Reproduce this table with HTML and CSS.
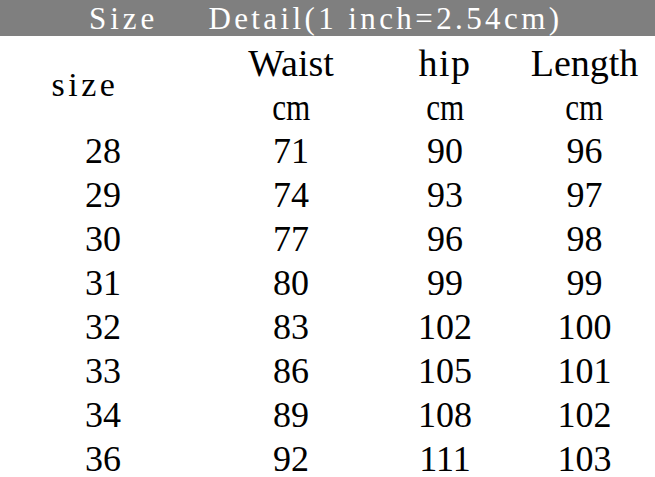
FILE: index.html
```html
<!DOCTYPE html>
<html>
<head>
<meta charset="utf-8">
<link rel="stylesheet" href="styles.css">
</head>
<body>
<div class="bar"><span class="bar-title">Size</span><span class="bar-detail">Detail(1 inch=2.54cm)</span></div>
<div class="chart">
  <div class="size-label">size</div>
  <div class="head">Waist</div>
  <div class="head head-hip">hip</div>
  <div class="head">Length</div>
  <div class="head"><span class="unit">cm</span></div>
  <div class="head"><span class="unit">cm</span></div>
  <div class="head"><span class="unit">cm</span></div>

  <div class="num">28</div><div class="num">71</div><div class="num">90</div><div class="num">96</div>
  <div class="num">29</div><div class="num">74</div><div class="num">93</div><div class="num">97</div>
  <div class="num">30</div><div class="num">77</div><div class="num">96</div><div class="num">98</div>
  <div class="num">31</div><div class="num">80</div><div class="num">99</div><div class="num">99</div>
  <div class="num">32</div><div class="num">83</div><div class="num">102</div><div class="num">100</div>
  <div class="num">33</div><div class="num">86</div><div class="num">105</div><div class="num">101</div>
  <div class="num">34</div><div class="num">89</div><div class="num">108</div><div class="num">102</div>
  <div class="num">36</div><div class="num">92</div><div class="num">111</div><div class="num">103</div>
</div>
</body>
</html>
```

FILE: styles.css
```css
html, body {
  margin: 0;
  padding: 0;
  background: #ffffff;
  overflow: hidden;
}

.bar {
  display: flex;
  gap: 50px;
  height: 36px;
  background: #7f7f7f;
  color: #ffffff;
  font-family: "Liberation Serif", serif;
  font-size: 31px;
  line-height: 38px;
  overflow: hidden;
  padding-left: 89px;
  white-space: nowrap;
}

.bar-title {
  letter-spacing: 4px;
}

.bar-detail {
  letter-spacing: 3.4px;
}

.chart {
  margin-top: 5px;
  display: grid;
  grid-template-columns: 206px 170px 138px 141px;
  grid-auto-rows: 44px;
  color: #000000;
}

.size-label {
  grid-row: 1 / span 2;
  grid-column: 1;
  font-family: "Liberation Serif", serif;
  font-size: 34px;
  letter-spacing: 3.5px;
  line-height: 88px;
  text-align: center;
  padding-right: 36px;
}

.head {
  font-family: "Liberation Serif", serif;
  font-size: 38px;
  line-height: 44px;
  text-align: center;
  white-space: nowrap;
}

.head-hip {
  letter-spacing: 1.5px;
}

.unit {
  display: inline-block;
  transform: scaleX(0.82);
}

.num {
  font-family: "Liberation Serif", serif;
  font-size: 36px;
  line-height: 44px;
  text-align: center;
}
```
